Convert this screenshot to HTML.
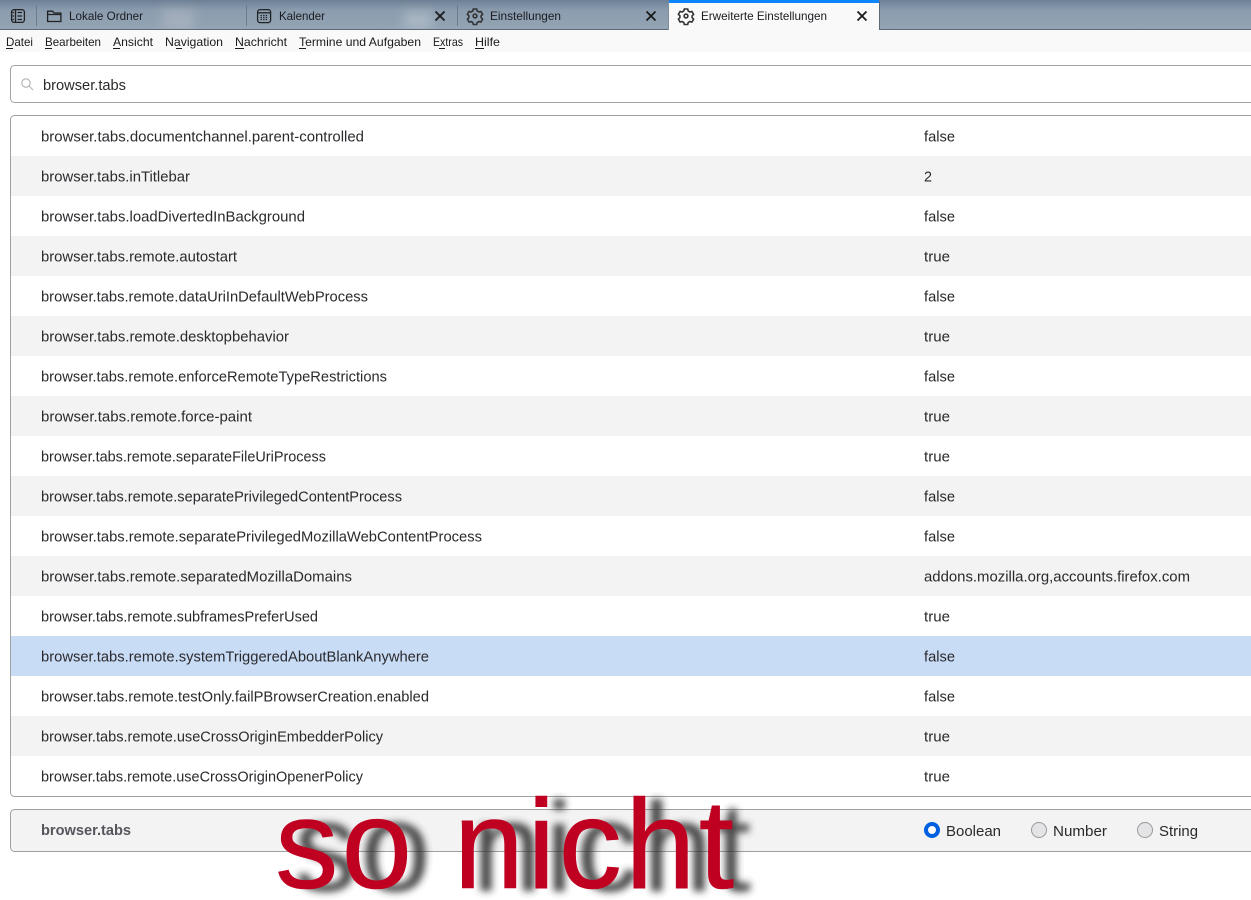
<!DOCTYPE html>
<html><head><meta charset="utf-8"><style>
html,body{margin:0;padding:0;background:#fff;overflow:hidden}
svg{display:block;font-family:"Liberation Sans",sans-serif}
.r{font-size:15px;fill:#2a2a2e}
.t{font-size:12px;fill:#1c1c20}
.m{font-size:12px;fill:#1a1a1a}
</style></head><body>
<svg width="1251" height="900" viewBox="0 0 1251 900" xmlns="http://www.w3.org/2000/svg">
<defs>
<linearGradient id="bar" x1="0" y1="0" x2="0" y2="1"><stop offset="0" stop-color="#6e8095"/><stop offset=".35" stop-color="#8a9cae"/><stop offset="1" stop-color="#93a4b4"/></linearGradient>
<filter id="bl" x="-50%" y="-50%" width="200%" height="200%"><feGaussianBlur stdDeviation="5"/></filter>
<filter id="sh" x="-10%" y="-20%" width="120%" height="140%"><feGaussianBlur stdDeviation="3.6"/></filter>
<g id="gear" fill="none" stroke="#333" stroke-width="1.6"><path d="M-1.7-7h3.4l.5 2 1.7 1 2-.6 1.7 3-1.5 1.4v1.9l1.5 1.4-1.7 3-2-.6-1.7 1-.5 2h-3.4l-.5-2-1.7-1-2 .6-1.7-3 1.5-1.4v-1.9l-1.5-1.4 1.7-3 2 .6 1.7-1z"/><circle r="1.9"/></g>
<path id="x" d="M-4.5-4.5L4.5 4.5M4.5-4.5L-4.5 4.5" stroke="#1a1a1a" stroke-width="1.8" fill="none"/>
</defs>

<!-- tab bar -->
<rect width="1251" height="29" fill="url(#bar)"/>
<rect x="162" y="10" width="32" height="22" fill="#a3aebc" filter="url(#bl)"/>
<rect x="404" y="12" width="28" height="18" fill="#a8b6c3" filter="url(#bl)"/>
<rect x="0" y="29" width="1251" height="1" fill="#5d6975"/>
<rect x="36" y="5" width="1" height="21" fill="#6c7c8c"/>
<rect x="246" y="5" width="1" height="21" fill="#6c7c8c"/>
<rect x="457" y="5" width="1" height="21" fill="#6c7c8c"/>

<g fill="none" stroke="#222" stroke-width="1.3">
<rect x="11.6" y="9.6" width="12.8" height="12.8" rx="2.5"/>
<path d="M15.5 10v12M17.5 12.5h4.5M17.5 16h4.5M17.5 19.5h4.5M12.5 12.5h1.5M12.5 16h1.5M12.5 19.5h1.5"/>
<path d="M47.6 21.5V11.2h5l1.5 1.8h6.8v8.5zM47.6 14.5h13.3"/>
<rect x="257.6" y="9.6" width="13" height="13" rx="2.5"/>
<path d="M258 12.8h12" />
<path d="M260.5 15.5h7M260.5 17.5h7M260.5 19.5h7" stroke-dasharray="1.4 1.2"/>
</g>
<text class="t" x="69" y="20" textLength="74" lengthAdjust="spacingAndGlyphs">Lokale Ordner</text>
<text class="t" x="279" y="20" textLength="46" lengthAdjust="spacingAndGlyphs">Kalender</text>
<use href="#x" x="440" y="16"/>
<use href="#gear" x="475" y="16"/>
<text class="t" x="490" y="20" textLength="71" lengthAdjust="spacingAndGlyphs">Einstellungen</text>
<use href="#x" x="651" y="16"/>

<!-- active tab -->
<rect x="669" y="0" width="210" height="31" fill="#f9f9fa"/>
<rect x="669" y="0" width="210" height="3" fill="#0a84ff"/>
<rect x="879" y="1" width="1" height="29" fill="#5d6975"/>
<rect x="668" y="1" width="1" height="29" fill="#7f8e9d"/>
<use href="#gear" x="686" y="16"/>
<text class="t" x="701" y="20" textLength="126" lengthAdjust="spacingAndGlyphs">Erweiterte Einstellungen</text>
<use href="#x" x="862" y="16"/>

<!-- menu -->
<rect x="0" y="30" width="1251" height="22" fill="#f9f9fa"/>
<text class="m" x="6" y="46" textLength="27" lengthAdjust="spacingAndGlyphs">Datei</text>
<text class="m" x="45" y="46" textLength="56" lengthAdjust="spacingAndGlyphs">Bearbeiten</text>
<text class="m" x="113" y="46" textLength="40" lengthAdjust="spacingAndGlyphs">Ansicht</text>
<text class="m" x="165" y="46" textLength="58" lengthAdjust="spacingAndGlyphs">Navigation</text>
<text class="m" x="235" y="46" textLength="52" lengthAdjust="spacingAndGlyphs">Nachricht</text>
<text class="m" x="299" y="46" textLength="122" lengthAdjust="spacingAndGlyphs">Termine und Aufgaben</text>
<text class="m" x="433" y="46" textLength="30" lengthAdjust="spacingAndGlyphs">Extras</text>
<text class="m" x="475" y="46" textLength="25" lengthAdjust="spacingAndGlyphs">Hilfe</text>
<g fill="#1a1a1a">
<rect x="6" y="48" width="7" height="1"/><rect x="45" y="48" width="7" height="1"/><rect x="113" y="48" width="7" height="1"/><rect x="176" y="48" width="6" height="1"/><rect x="235" y="48" width="9" height="1"/><rect x="299" y="48" width="7" height="1"/><rect x="439" y="48" width="6" height="1"/><rect x="475" y="48" width="9" height="1"/>
</g>

<!-- search -->
<rect x="10.5" y="65.5" width="1260" height="37" rx="4" fill="#fff" stroke="#a3a3a3"/>
<circle cx="26" cy="83" r="4.2" fill="none" stroke="#b0b0b0" stroke-width="1.1"/>
<path d="M29 86l4 4" stroke="#b0b0b0" stroke-width="1.1"/>
<text class="r" x="43" y="90" textLength="83" lengthAdjust="spacingAndGlyphs">browser.tabs</text>

<!-- list -->
<g fill="#f3f3f3">
<rect x="11" y="156" width="1240" height="40"/><rect x="11" y="236" width="1240" height="40"/><rect x="11" y="316" width="1240" height="40"/><rect x="11" y="396" width="1240" height="40"/><rect x="11" y="476" width="1240" height="40"/><rect x="11" y="556" width="1240" height="40"/><rect x="11" y="716" width="1240" height="40"/>
</g>
<rect x="11" y="636" width="1240" height="40" fill="#c9dcf5"/>
<rect x="10.5" y="115.5" width="1260" height="681" rx="4" fill="none" stroke="#a0a0a0"/>

<g class="r">
<text class="r" x="41" y="141.5" textLength="323" lengthAdjust="spacingAndGlyphs">browser.tabs.documentchannel.parent-controlled</text>
<text class="r" x="41" y="181.5" textLength="149" lengthAdjust="spacingAndGlyphs">browser.tabs.inTitlebar</text>
<text class="r" x="41" y="221.5" textLength="264" lengthAdjust="spacingAndGlyphs">browser.tabs.loadDivertedInBackground</text>
<text class="r" x="41" y="261.5" textLength="196" lengthAdjust="spacingAndGlyphs">browser.tabs.remote.autostart</text>
<text class="r" x="41" y="301.5" textLength="327" lengthAdjust="spacingAndGlyphs">browser.tabs.remote.dataUriInDefaultWebProcess</text>
<text class="r" x="41" y="341.5" textLength="248" lengthAdjust="spacingAndGlyphs">browser.tabs.remote.desktopbehavior</text>
<text class="r" x="41" y="381.5" textLength="346" lengthAdjust="spacingAndGlyphs">browser.tabs.remote.enforceRemoteTypeRestrictions</text>
<text class="r" x="41" y="421.5" textLength="211" lengthAdjust="spacingAndGlyphs">browser.tabs.remote.force-paint</text>
<text class="r" x="41" y="461.5" textLength="285" lengthAdjust="spacingAndGlyphs">browser.tabs.remote.separateFileUriProcess</text>
<text class="r" x="41" y="501.5" textLength="361" lengthAdjust="spacingAndGlyphs">browser.tabs.remote.separatePrivilegedContentProcess</text>
<text class="r" x="41" y="541.5" textLength="441" lengthAdjust="spacingAndGlyphs">browser.tabs.remote.separatePrivilegedMozillaWebContentProcess</text>
<text class="r" x="41" y="581.5" textLength="311" lengthAdjust="spacingAndGlyphs">browser.tabs.remote.separatedMozillaDomains</text>
<text class="r" x="41" y="621.5" textLength="277" lengthAdjust="spacingAndGlyphs">browser.tabs.remote.subframesPreferUsed</text>
<text class="r" x="41" y="661.5" textLength="388" lengthAdjust="spacingAndGlyphs">browser.tabs.remote.systemTriggeredAboutBlankAnywhere</text>
<text class="r" x="41" y="701.5" textLength="388" lengthAdjust="spacingAndGlyphs">browser.tabs.remote.testOnly.failPBrowserCreation.enabled</text>
<text class="r" x="41" y="741.5" textLength="342" lengthAdjust="spacingAndGlyphs">browser.tabs.remote.useCrossOriginEmbedderPolicy</text>
<text class="r" x="41" y="781.5" textLength="322" lengthAdjust="spacingAndGlyphs">browser.tabs.remote.useCrossOriginOpenerPolicy</text>

<text class="r" x="924" y="141.5" textLength="31" lengthAdjust="spacingAndGlyphs">false</text>
<text class="r" x="924" y="181.5" textLength="8" lengthAdjust="spacingAndGlyphs">2</text>
<text class="r" x="924" y="221.5" textLength="31" lengthAdjust="spacingAndGlyphs">false</text>
<text class="r" x="924" y="261.5" textLength="26" lengthAdjust="spacingAndGlyphs">true</text>
<text class="r" x="924" y="301.5" textLength="31" lengthAdjust="spacingAndGlyphs">false</text>
<text class="r" x="924" y="341.5" textLength="26" lengthAdjust="spacingAndGlyphs">true</text>
<text class="r" x="924" y="381.5" textLength="31" lengthAdjust="spacingAndGlyphs">false</text>
<text class="r" x="924" y="421.5" textLength="26" lengthAdjust="spacingAndGlyphs">true</text>
<text class="r" x="924" y="461.5" textLength="26" lengthAdjust="spacingAndGlyphs">true</text>
<text class="r" x="924" y="501.5" textLength="31" lengthAdjust="spacingAndGlyphs">false</text>
<text class="r" x="924" y="541.5" textLength="31" lengthAdjust="spacingAndGlyphs">false</text>
<text class="r" x="924" y="581.5" textLength="266" lengthAdjust="spacingAndGlyphs">addons.mozilla.org,accounts.firefox.com</text>
<text class="r" x="924" y="621.5" textLength="26" lengthAdjust="spacingAndGlyphs">true</text>
<text class="r" x="924" y="661.5" textLength="31" lengthAdjust="spacingAndGlyphs">false</text>
<text class="r" x="924" y="701.5" textLength="31" lengthAdjust="spacingAndGlyphs">false</text>
<text class="r" x="924" y="741.5" textLength="26" lengthAdjust="spacingAndGlyphs">true</text>
<text class="r" x="924" y="781.5" textLength="26" lengthAdjust="spacingAndGlyphs">true</text>
</g>

<!-- bottom row -->
<rect x="10.5" y="809.5" width="1260" height="42" rx="4" fill="#f3f3f3" stroke="#a0a0a0"/>
<text x="41" y="835" font-size="15" font-weight="700" fill="#55555c" textLength="90" lengthAdjust="spacingAndGlyphs">browser.tabs</text>
<circle cx="932" cy="830" r="6" fill="#fff" stroke="#0060df" stroke-width="4"/>
<text class="r" x="946" y="836" textLength="55" lengthAdjust="spacingAndGlyphs">Boolean</text>
<circle cx="1039" cy="830" r="7.5" fill="#e4e4e6" stroke="#9a9a9a"/>
<text class="r" x="1053" y="836" textLength="54" lengthAdjust="spacingAndGlyphs">Number</text>
<circle cx="1145" cy="830" r="7.5" fill="#e4e4e6" stroke="#9a9a9a"/>
<text class="r" x="1159" y="836" textLength="39" lengthAdjust="spacingAndGlyphs">String</text>

<!-- overlay -->
<text x="294" y="891" font-size="127" fill="#333" opacity=".88" filter="url(#sh)" textLength="457" lengthAdjust="spacing">so nicht</text>
<text x="275" y="888" font-size="127" fill="#c00021" stroke="#c00021" stroke-width=".6" textLength="459" lengthAdjust="spacing">so nicht</text>
</svg>
</body></html>
